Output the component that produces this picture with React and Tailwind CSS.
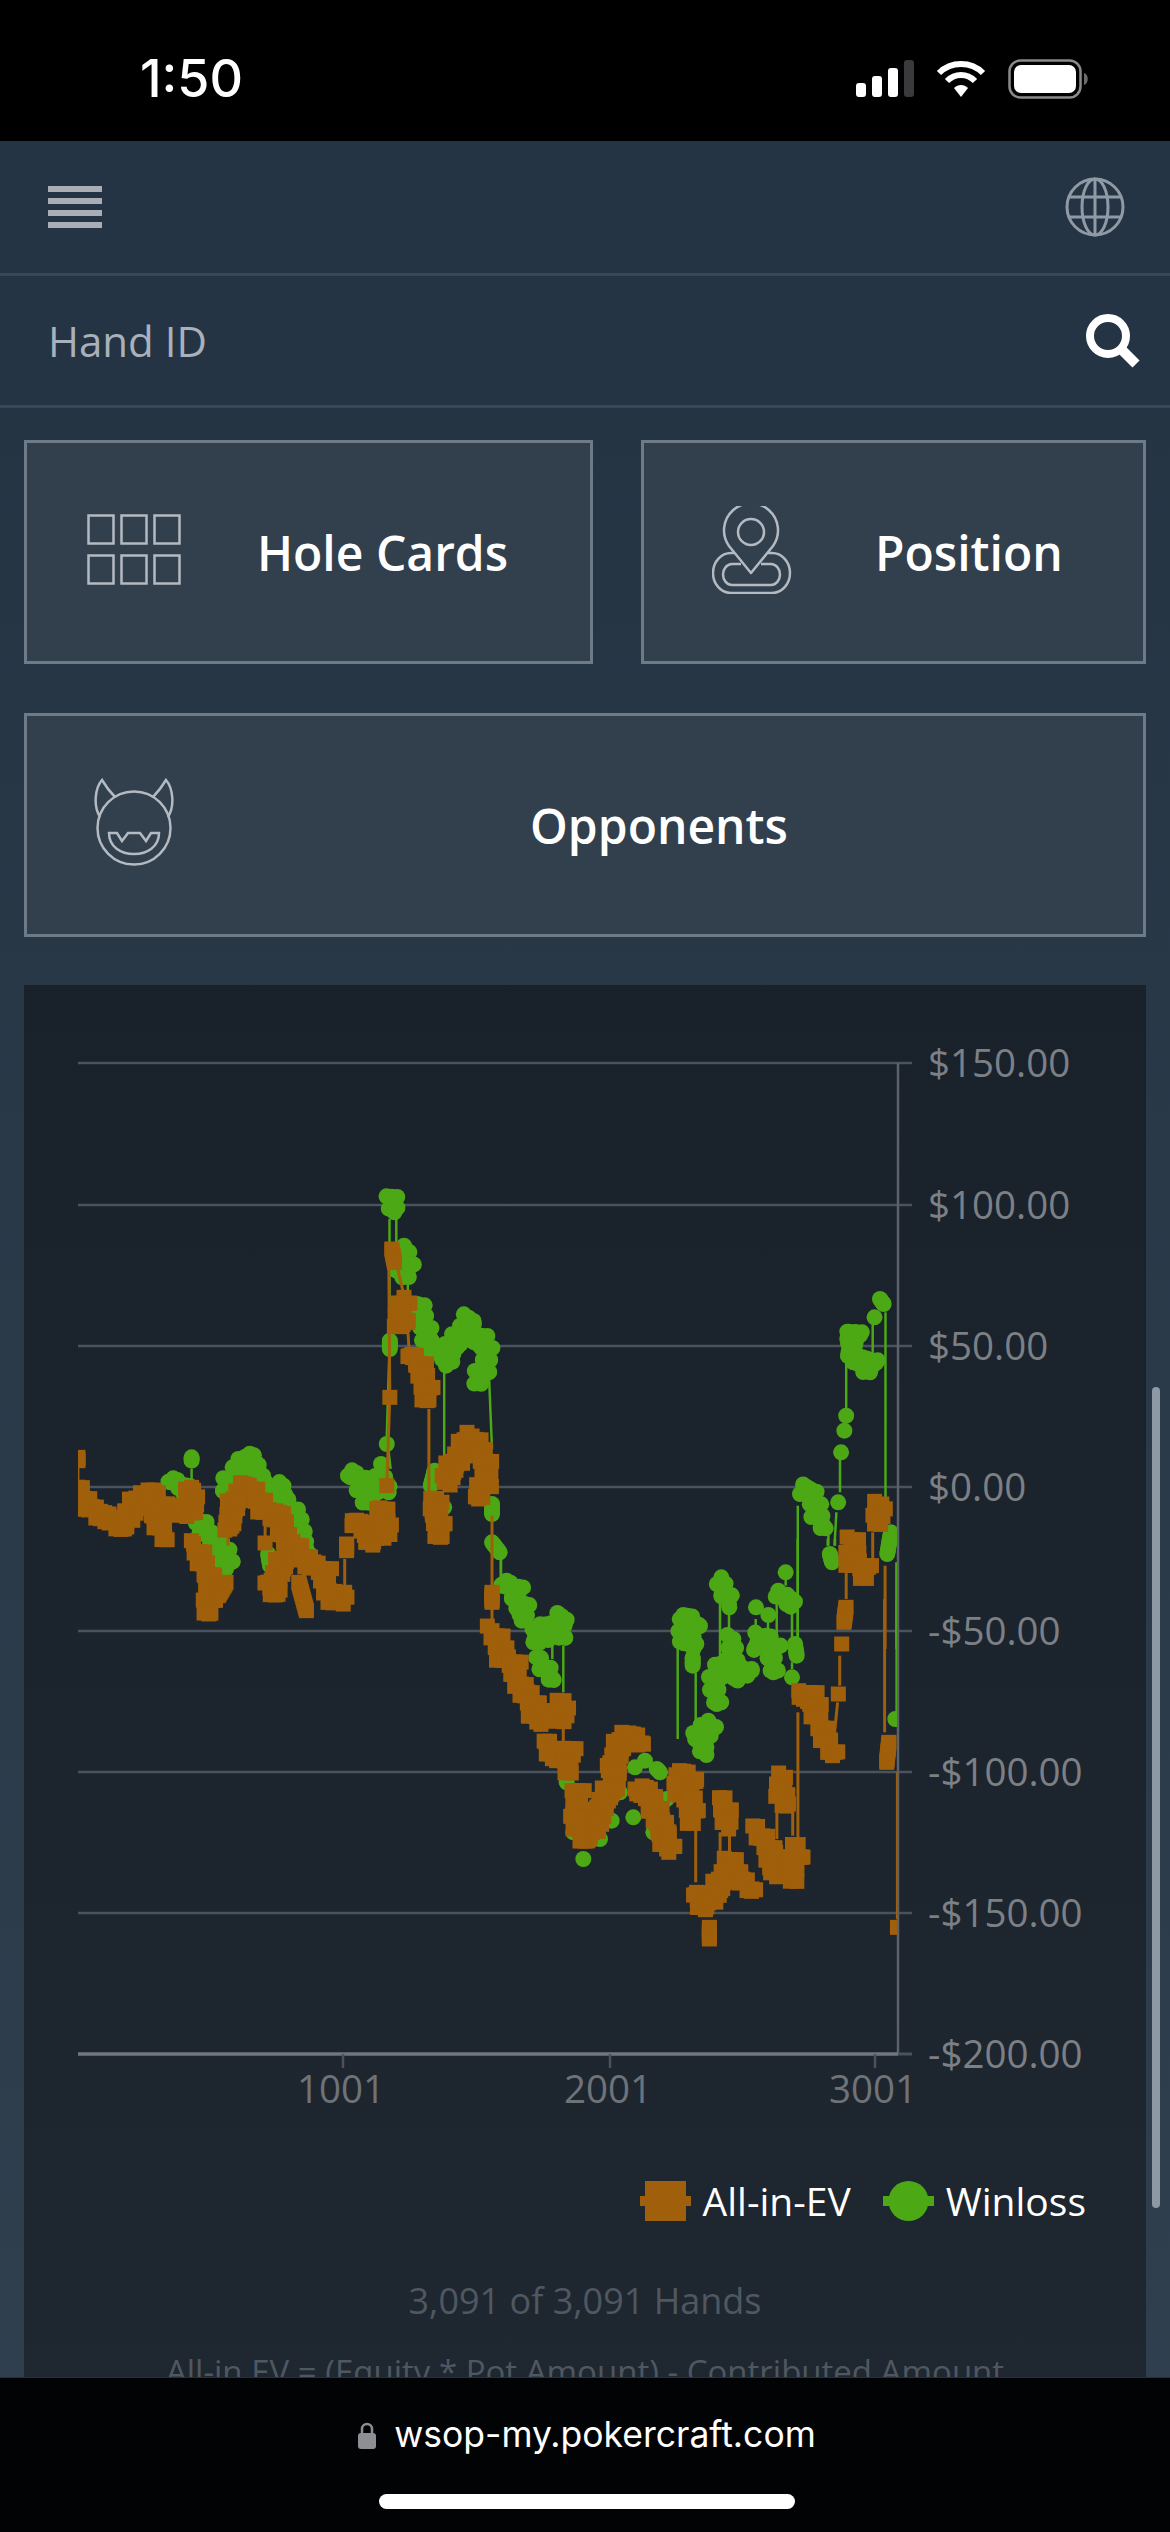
import React from 'react';

const GREEN = '#4ca814';
const ORANGE = '#a05f0a';

// coordinate helpers: the series were read off crops of the chart
const z3 = ([x, y]) => [50 + x / 2.613, 1150 + y / 3];
const z4 = ([x, y]) => [600 + x / 2.75, 1150 + y / 3];
const z5 = ([x, y]) => [500 + x / 2.34, 1600 + y / 3];
const z9 = ([x, y]) => [430 + x / 3, 1560 + y / 3];
const z10 = ([x, y]) => [640 + x / 3, 1540 + y / 3];

const orangeBlobs = [
  ...[
    [[73, 925], [73, 935]],
    [[73, 1015], [90, 1060], [125, 1095], [170, 1115], [185, 1140], [200, 1105], [235, 1050], [272, 1035], [272, 1095], [300, 1165]],
    [[272, 1070], [340, 1085], [370, 1090], [370, 1015]],
    [[375, 1185], [400, 1240], [420, 1300], [415, 1395]],
    [[460, 1300], [440, 1340]],
    [[470, 1140], [470, 1095], [505, 1015], [535, 1030], [560, 1090], [610, 1105], [610, 1180]],
    [[562, 1182]],
    [[570, 1300], [585, 1335], [590, 1280], [640, 1180], [670, 1240], [720, 1265], [720, 1320], [745, 1360], [770, 1330]],
    [[650, 1300], [670, 1385]],
    [[775, 1185], [775, 1205]],
    [[790, 1115], [830, 1140], [830, 1185], [880, 1130], [865, 1075], [880, 1150]],
    [[880, 1010]],
    [[888, 745]],
    [[893, 300], [900, 340]],
    [[925, 445], [925, 480], [905, 520], [935, 520]],
    [[938, 620], [965, 640], [985, 710], [985, 755]],
    [[1000, 1100], [1010, 1060], [1020, 1165]],
    [[1030, 1000], [1065, 930], [1100, 860], [1135, 920], [1145, 990], [1120, 1050]],
  ].map((s) => s.map(z3)),
  ...[
    [[186, 100], [186, 130]],
    [[186, 215], [210, 240], [215, 300], [255, 310], [260, 370], [285, 400], [310, 420], [310, 480], [370, 470], [395, 470], [402, 425]],
    [[348, 550], [360, 590], [410, 590], [420, 575], [410, 635]],
    [[445, 695], [440, 790], [460, 845], [500, 790], [520, 720], [550, 690], [550, 620], [560, 580], [590, 525], [640, 555]],
    [[615, 690], [660, 700], [680, 760], [700, 830], [710, 870]],
  ].map((s) => s.map(z9)),
  ...[
    [[335, 435]],
    [[345, 590], [370, 660], [395, 730], [395, 760]],
    [[420, 515], [450, 545], [410, 570], [450, 600], [450, 670]],
    [[518, 600], [530, 650], [535, 690]],
    [[490, 985], [490, 1020]],
    [[460, 880], [470, 930], [510, 870], [545, 780], [550, 830], [590, 870]],
    [[600, 690], [625, 730], [645, 830], [645, 760]],
    [[668, 535], [650, 580], [675, 615]],
    [[690, 740], [695, 780], [683, 840]],
    [[700, 295], [735, 290], [740, 350], [760, 410], [778, 470]],
    [[905, 490], [910, 430]],
    [[930, 985]],
  ].map((s) => s.map(z5)),
  ...[
    [[618, 205], [612, 250]],
    [[605, 315]],
    [[595, 465]],
  ].map((s) => s.map(z10)),
  ...[
    [[690, 1190], [705, 1170], [690, 1240], [730, 1250], [730, 1285]],
    [[755, 1125], [770, 1080], [775, 1065]],
  ].map((s) => s.map(z4)),
];

const orangeLines = [
  ...[
    [[73, 950], [73, 1010]], [[885, 300], [888, 745], [880, 1010]], [[905, 340], [925, 440]], [[935, 540], [938, 600]],
    [[990, 780], [990, 1040]], [[1155, 1100], [1155, 1310]], [[465, 1160], [465, 1190]], [[562, 1120], [562, 1190]], [[770, 1230], [770, 1310]],
  ].map((s) => s.map(z3)),
  ...[
    [[186, 130], [186, 200]], [[400, 450], [400, 560]],
  ].map((s) => s.map(z9)),
  ...[
    [[458, 690], [458, 850]], [[515, 700], [515, 840]], [[537, 700], [537, 760]], [[697, 340], [697, 720]],
    [[648, 640], [648, 720]], [[685, 640], [685, 710]], [[795, 170], [795, 260]], [[790, 310], [783, 400]],
    [[900, 0], [900, 400]], [[930, 520], [930, 960]],
  ].map((s) => s.map(z5)),
  ...[
    [[784, 1250], [784, 1500]], [[677, 1270], [677, 1350]], [[750, 1150], [750, 1230]],
  ].map((s) => s.map(z4)),
];

const greenBlobs = [
  ...[
    [[370, 925], [370, 935]],
    [[315, 1000], [340, 1005], [370, 1040]],
    [[380, 1095], [400, 1140], [430, 1180], [465, 1215], [460, 1260]],
    [[510, 925], [535, 930], [490, 960], [470, 1000], [460, 1040], [550, 980], [560, 1000]],
    [[610, 1010], [590, 1040], [615, 1060], [650, 1115], [650, 1170], [670, 1200]],
    [[570, 1215], [575, 1250]],
    [[785, 985], [805, 975], [825, 1060], [860, 990], [885, 1030]],
    [[865, 945]],
    [[880, 885]],
    [[890, 145], [900, 175], [900, 190]],
    [[888, 575], [888, 600]],
    [[925, 290], [935, 335], [935, 375], [905, 365]],
    [[960, 465], [975, 510], [985, 565], [995, 605]],
    [[1035, 650], [1040, 600], [1070, 570], [1085, 530], [1100, 510], [1100, 570], [1135, 570], [1145, 630], [1120, 700]],
    [[995, 1010], [1005, 965]],
    [[1030, 1075]],
    [[1155, 1065], [1155, 1095]],
    [[1155, 1180], [1175, 1210]],
  ].map((s) => s.map(z3)),
  ...[
    [[215, 80], [250, 80], [265, 95], [255, 130], [290, 150], [275, 185]],
    [[310, 250], [340, 205], [340, 240], [400, 180], [390, 235]],
    [[330, 305], [350, 330], [365, 355]],
    [[410, 640]], [[410, 670]], [[430, 750]], [[430, 820]], [[510, 840]], [[460, 900]], [[545, 785]], [[570, 700]],
    [[615, 625]], [[645, 605]], [[680, 630], [690, 640]], [[610, 775]], [[670, 820]], [[710, 720]],
  ].map((s) => s.map(z9)),
  ...[
    [[130, 228], [165, 255], [120, 295], [160, 300], [160, 330]],
    [[158, 355], [158, 380]],
    [[244, 115], [250, 160], [265, 190], [267, 195]],
    [[240, 375], [225, 420], [225, 450], [230, 495]],
    [[280, 300], [280, 330], [270, 410], [335, 390]],
    [[348, 205]],
    [[385, 228]],
    [[345, 325], [370, 290], [405, 320], [395, 360], [400, 400]],
    [[437, 100]],
    [[415, 155], [440, 185], [455, 180]],
    [[465, 315], [470, 350]],
    [[456, 415]],
    [[205, 545], [210, 570], [175, 590]],
  ].map((s) => s.map(z10)),
  ...[
    [[475, 455], [465, 415], [490, 385]],
    [[925, 360]],
  ].map((s) => s.map(z5)),
  ...[
    [[755, 505]],
    [[770, 450], [780, 465]],
    [[680, 570], [705, 550], [685, 620], [730, 640], [750, 635], [735, 665]],
    [[677, 800]], [[672, 845]], [[663, 910]], [[655, 1060]],
    [[550, 1035], [585, 1020], [595, 1095], [615, 1130]],
    [[632, 1215], [638, 1240]],
    [[800, 1150], [790, 1215]],
  ].map((s) => s.map(z4)),
];

const greenLines = [
  ...[
    [[370, 960], [370, 1000]], [[887, 210], [887, 590], [880, 860], [890, 960]], [[905, 210], [905, 290]], [[935, 395], [935, 440]],
    [[990, 610], [990, 650]], [[1030, 670], [1030, 960]], [[1147, 680], [1155, 900]], [[1178, 1230], [1178, 1290]],
  ].map((s) => s.map(z3)),
  ...[
    [[213, 0], [213, 60]], [[400, 260], [400, 400]], [[367, 260], [367, 300]],
  ].map((s) => s.map(z9)),
  ...[
    [[113, 320], [113, 600]], [[167, 400], [167, 560]], [[240, 180], [240, 360]], [[267, 220], [267, 280]], [[347, 240], [347, 300]],
    [[384, 250], [384, 280]], [[410, 180], [410, 300]], [[456, 190], [456, 300]], [[473, 0], [473, 300]], [[437, 120], [437, 140]],
    [[456, 370], [456, 390]], [[563, 0], [563, 20]], [[585, 0], [585, 20]],
  ].map((s) => s.map(z10)),
  ...[
    [[677, 640], [677, 780]], [[660, 930], [660, 1030]], [[650, 1090], [645, 1190]], [[628, 1150], [628, 1190]], [[544, 1070], [544, 1500]],
    [[750, 525], [750, 620]], [[785, 490], [785, 1050]], [[815, 1240], [815, 1500]],
  ].map((s) => s.map(z4)),
  [z5([928, 0]), z5([928, 350])],
];

// fill a stroke with markers, scattered a little so a run reads as a thick band
function markers(blobs) {
  const out = [];
  blobs.forEach((pts) => {
    out.push(pts[0]);
    for (let i = 1; i < pts.length; i++) {
      const [ax, ay] = pts[i - 1];
      const [bx, by] = pts[i];
      const n = Math.max(1, Math.ceil(Math.hypot(bx - ax, by - ay) / 2));
      for (let k = 1; k <= n; k++) {
        const atEnd = i === pts.length - 1 && k === n;
        const c = out.length;
        const spread = pts.length > 2 && !atEnd ? 1 : 0;
        out.push([
          ax + ((bx - ax) * k) / n + spread * (((c * 7) % 13) - 6),
          ay + ((by - ay) * k) / n + spread * (((c * 11) % 13) - 6),
        ]);
      }
    }
  });
  return out;
}

const toPoints = (pts) => pts.map(([x, y]) => `${x.toFixed(1)},${y.toFixed(1)}`).join(' ');

const yTicks = [
  ['$150.00', 1064], ['$100.00', 1206], ['$50.00', 1347], ['$0.00', 1488],
  ['-$50.00', 1632], ['-$100.00', 1773], ['-$150.00', 1914], ['-$200.00', 2055],
];
const xTicks = [['1001', 343], ['2001', 610], ['3001', 875]];

function Chart() {
  return (
    <svg viewBox="24 986 1122 1144" className="block w-[1122px] h-[1144px] font-['Open_Sans',sans-serif]">
      <defs>
        <clipPath id="plot">
          <rect x="78" y="1064" width="819" height="991" />
        </clipPath>
      </defs>
      {yTicks.slice(0, -1).map(([label, y]) => (
        <line key={label} x1="78" x2="912" y1={y} y2={y} stroke="#4a525c" strokeWidth="2.5" />
      ))}
      <line x1="898" x2="898" y1="1064" y2="2055" stroke="#5b626b" strokeWidth="2.5" />
      <line x1="78" x2="898" y1="2055" y2="2055" stroke="#70767e" strokeWidth="3.5" />
      <line x1="898" x2="912" y1="2055" y2="2055" stroke="#4a525c" strokeWidth="3" />
      {xTicks.map(([label, x]) => (
        <line key={label} x1={x} x2={x} y1="2055" y2="2069" stroke="#4a525c" strokeWidth="2.5" />
      ))}
      <g clipPath="url(#plot)">
        {greenLines.map((pts, i) => (
          <polyline key={i} points={toPoints(pts)} fill="none" stroke={GREEN} strokeWidth="2.5" />
        ))}
        {markers(greenBlobs).map(([x, y], i) => (
          <circle key={i} cx={x} cy={y} r="8" fill={GREEN} />
        ))}
        {orangeLines.map((pts, i) => (
          <polyline key={i} points={toPoints(pts)} fill="none" stroke={ORANGE} strokeWidth="3" />
        ))}
        {markers(orangeBlobs).map(([x, y], i) => (
          <rect key={i} x={x - 7.5} y={y - 7.5} width="15" height="15" fill={ORANGE} />
        ))}
      </g>
      {yTicks.map(([label, y]) => (
        <text key={label} x="928" y={y + 14} fontSize="38.5" fill="#7c8085">
          {label}
        </text>
      ))}
      {xTicks.map(([label, x]) => (
        <text key={label} x={x - 2} y="2104" fontSize="38.5" fill="#6f7378" textAnchor="middle">
          {label}
        </text>
      ))}
    </svg>
  );
}

function SignalIcon() {
  return (
    <svg width="58" height="38" viewBox="0 0 58 38" className="block">
      <rect x="0" y="23" width="10" height="14" rx="3" fill="#fff" />
      <rect x="16" y="16" width="10" height="21" rx="3" fill="#fff" />
      <rect x="32" y="8" width="10" height="29" rx="3" fill="#fff" />
      <rect x="48" y="0" width="10" height="37" rx="3" fill="#3a3a3c" />
    </svg>
  );
}

function WifiIcon() {
  return (
    <svg width="50" height="38" viewBox="0 0 50 38" className="block">
      <path d="M3 13 C15 1 35 1 47 13" fill="none" stroke="#fff" strokeWidth="6" />
      <path d="M11 21 C19 13 31 13 39 21" fill="none" stroke="#fff" strokeWidth="6" />
      <path d="M18 28 C22 24 28 24 32 28 L25 37 Z" fill="#fff" />
    </svg>
  );
}

function BatteryIcon() {
  return (
    <svg width="82" height="40" viewBox="0 0 82 40" className="block">
      <rect x="1.5" y="1.5" width="71" height="37" rx="11" fill="none" stroke="#8a8a8e" strokeWidth="2.5" />
      <rect x="6" y="6" width="62" height="28" rx="7" fill="#fff" />
      <path d="M76 14 C81 15 81 25 76 26 Z" fill="#6b6b6e" />
    </svg>
  );
}

function GlobeIcon() {
  return (
    <svg width="60" height="60" viewBox="0 0 60 60" fill="none" stroke="#8f9aa5" strokeWidth="3" className="block">
      <circle cx="30" cy="30" r="28" />
      <ellipse cx="30" cy="30" rx="13" ry="28" />
      <path d="M5 20 H55 M5 40 H55" />
      <path d="M30 2 V58" />
    </svg>
  );
}

function SearchIcon() {
  return (
    <svg width="54" height="54" viewBox="0 0 54 54" fill="none" stroke="#fff" className="block">
      <circle cx="22" cy="22" r="18" strokeWidth="8" />
      <path d="M35 35 L50 50" strokeWidth="10" />
    </svg>
  );
}

function CardsIcon() {
  const xs = [0, 33, 66];
  const ys = [0, 40];
  return (
    <svg width="94" height="71" viewBox="0 0 94 71" fill="none" stroke="#b4bac1" strokeWidth="2.5" className="block shrink-0 -mt-[6px]">
      {ys.map((y) => xs.map((x) => <rect key={`${x}-${y}`} x={x + 1.5} y={y + 1.5} width="25" height="28" />))}
    </svg>
  );
}

function PinIcon() {
  return (
    <svg width="80" height="88" viewBox="0 0 80 88" fill="none" stroke="#b4bac1" strokeWidth="2.5" className="block shrink-0 -mt-[5px]">
      <path d="M39 67 L17 40 A27 27 0 1 1 61 40 Z" strokeLinejoin="round" />
      <circle cx="39" cy="26" r="13" />
      <path d="M22 47 H19 A18 20 0 0 0 19 87 H60 A18 20 0 0 0 60 47 H56" />
      <path d="M29 58 H20 A9 10.5 0 0 0 20 79 H59 A9 10.5 0 0 0 59 58 H49" />
    </svg>
  );
}

function DevilIcon() {
  return (
    <svg width="82" height="90" viewBox="0 0 82 90" fill="none" stroke="#b4bac1" strokeWidth="2.5" className="block shrink-0 -mt-[5px]">
      <circle cx="41" cy="50" r="36.5" />
      <path d="M7 39 C0 28 2 10 9 2 C12 7 18 15 22 19" />
      <path d="M75 39 C82 28 80 10 73 2 C70 7 64 15 60 19" />
      <path d="M16 55 H24 L29 63 L35 55 H47 L53 63 L58 55 H66 C66 69 54 76 41 76 C28 76 16 69 16 55 Z" />
    </svg>
  );
}

function FilterButton({ className, children }) {
  return (
    <div className={`flex items-center h-[224px] border-[3px] border-[#6e7a86] bg-[#323f4d] ${className}`}>
      {children}
    </div>
  );
}

export default function App() {
  return (
    <div className="relative flex flex-col w-[1170px] h-[2532px] overflow-hidden bg-black font-['Open_Sans',sans-serif]">
      {/* status bar */}
      <div className="flex items-center justify-between h-[141px] shrink-0 bg-black pl-[140px] pr-[80px] pt-[16px]">
        <span className="font-['Inter',sans-serif] font-medium text-[52px] leading-none text-white">1:50</span>
        <div className="flex items-center gap-[22px]">
          <SignalIcon />
          <WifiIcon />
          <BatteryIcon />
        </div>
      </div>

      <div className="flex-1 min-h-0 overflow-hidden bg-gradient-to-b from-[#243342] to-[#2f3f4e]">
        {/* top bar */}
        <div className="flex items-center justify-between h-[135px] border-b-[3px] border-[#3a4856] bg-[#253444] pl-[48px] pr-[45px]">
          <div className="flex flex-col gap-[6px] w-[54px]">
            <div className="h-[6px] bg-[#a8adb6]" />
            <div className="h-[6px] bg-[#a8adb6]" />
            <div className="h-[6px] bg-[#a8adb6]" />
            <div className="h-[6px] bg-[#a8adb6]" />
          </div>
          <GlobeIcon />
        </div>
        {/* search */}
        <div className="flex items-center justify-between h-[132px] border-b-[3px] border-[#3a4856] bg-[#253444] pl-[48px] pr-[30px]">
          <span className="text-[42px] font-normal text-[#a9b1ba]">Hand ID</span>
          <SearchIcon />
        </div>

        <div className="px-[24px] pt-[32px]">
          <div className="flex gap-[48px]">
            <FilterButton className="w-[569px] pl-[60px] gap-[76px]">
              <CardsIcon />
              <span className="mt-[2px] text-[48px] font-semibold text-white">Hole Cards</span>
            </FilterButton>
            <FilterButton className="flex-1 pl-[68px] gap-[83px]">
              <PinIcon />
              <span className="mt-[2px] text-[48px] font-semibold text-white">Position</span>
            </FilterButton>
          </div>
          <FilterButton className="mt-[49px] pl-[66px]">
            <DevilIcon />
            <span className="mt-[2px] flex-1 text-center text-[48px] font-semibold text-white">Opponents</span>
          </FilterButton>

          {/* chart panel */}
          <div className="mt-[48px] h-[1500px] bg-gradient-to-b from-[#19212b] to-[#1f2731]">
            <Chart />
            <div className="flex items-center justify-end h-[40px] mt-[52px] pr-[60px] text-[39px] text-white">
              <svg width="51" height="40" viewBox="0 0 51 40" className="block mr-[12px]">
                <rect x="0" y="15" width="51" height="10" fill={ORANGE} />
                <rect x="5" y="0" width="41" height="40" fill={ORANGE} />
              </svg>
              <span>All-in-EV</span>
              <svg width="51" height="40" viewBox="0 0 51 40" className="block ml-[32px] mr-[12px]">
                <rect x="0" y="15" width="51" height="10" fill={GREEN} />
                <circle cx="25.5" cy="20" r="20" fill={GREEN} />
              </svg>
              <span>Winloss</span>
            </div>
            <div className="flex flex-col items-center text-[#4f5760] leading-[44px]">
              <p className="mt-[58px] text-[36px]">3,091 of 3,091 Hands</p>
              <p className="mt-[27px] text-[33px] whitespace-nowrap">All-in EV = (Equity * Pot Amount) - Contributed Amount</p>
            </div>
          </div>
        </div>
      </div>

      {/* browser bar */}
      <div className="flex flex-col items-center h-[155px] shrink-0 bg-[#020305] border-t border-[#2a2f35] pt-[33px] pl-[4px]">
        <div className="flex items-center gap-[18px] h-[48px]">
          <svg width="18" height="28" viewBox="0 0 18 28" className="block">
            <path d="M4 13 V8 A5 5 0 0 1 14 8 V13" fill="none" stroke="#8e8e93" strokeWidth="2.5" />
            <rect x="0" y="12" width="18" height="16" rx="3" fill="#8e8e93" />
          </svg>
          <span className="font-['Inter',sans-serif] text-[35.5px] text-white">wsop-my.pokercraft.com</span>
        </div>
        <div className="mt-[35px] w-[416px] h-[15px] rounded-full bg-white" />
      </div>

      {/* scrollbar */}
      <div className="absolute left-[1152px] top-[1387px] w-[8px] h-[821px] rounded-full bg-[#8f99a4]" />
    </div>
  );
}
